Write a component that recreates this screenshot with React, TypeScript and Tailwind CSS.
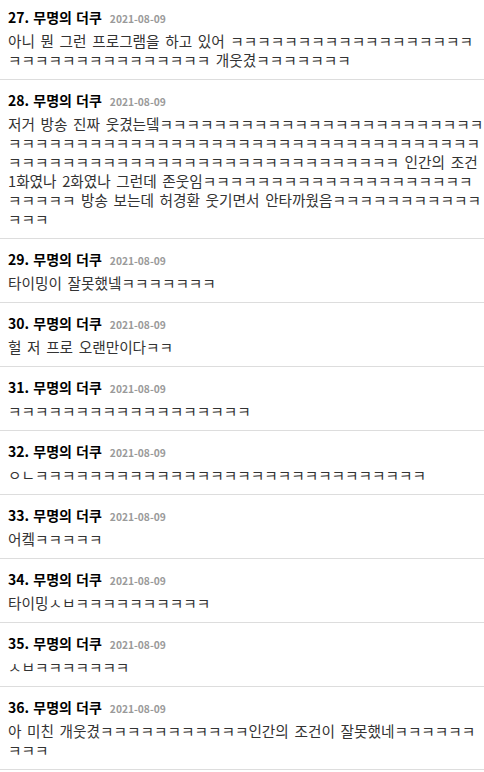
import React from "react";

const K = (n: number) => "ㅋ".repeat(n);

const items: { n: number; text: string }[] = [
  { n: 27, text: "아니 뭔 그런 프로그램을 하고 있어 " + K(33) + " 개웃겼" + K(7) },
  {
    n: 28,
    text:
      "저거 방송 진짜 웃겼는뎈" +
      K(88) +
      " 인간의 조건 1화였나 2화였나 그런데 존웃임" +
      K(25) +
      " 방송 보는데 허경환 웃기면서 안타까웠음" +
      K(14),
  },
  { n: 29, text: "타이밍이 잘못했넼" + K(7) },
  { n: 30, text: "헐 저 프로 오랜만이다" + K(2) },
  { n: 31, text: K(18) },
  { n: 32, text: "ㅇㄴ" + K(29) },
  { n: 33, text: "어켘" + K(5) },
  { n: 34, text: "타이밍ㅅㅂ" + K(10) },
  { n: 35, text: "ㅅㅂ" + K(7) },
  { n: 36, text: "아 미친 개웃겼" + K(11) + "인간의 조건이 잘못했네" + K(9) },
];

export default function App() {
  return (
    <div className="w-[484px] h-[772px] overflow-hidden bg-white font-['Noto_Sans_CJK_KR',sans-serif]">
      <div className="-mt-[3px]">
        {items.map((it) => (
          <div key={it.n} className="border-b border-[#dddddd] pl-2 py-[10px]">
            <div className="h-5 flex items-baseline leading-5">
              <span className="text-[14px] font-bold text-black [word-spacing:1px]">{it.n}. 무명의 더쿠</span>
              <span className="ml-[8px] text-[10.25px] font-bold text-[#9a9a9a]">2021-08-09</span>
            </div>
            <div className="mt-1 text-[14.667px] leading-[19px] text-[#333333] [word-spacing:2.3px]">
              {it.text}
            </div>
          </div>
        ))}
      </div>
    </div>
  );
}
